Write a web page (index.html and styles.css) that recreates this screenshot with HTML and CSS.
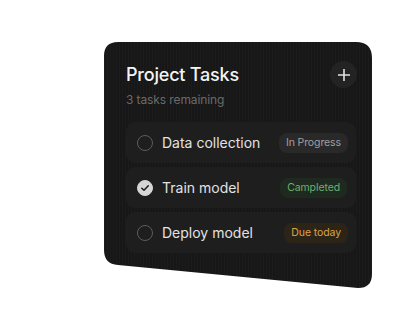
FILE: index.html
```html
<!DOCTYPE html>
<html lang="en">

<head>
    <meta charset="UTF-8">
    <meta name="viewport" content="width=device-width, initial-scale=1.0">
    <title>Project Tasks</title>
    <link rel="stylesheet" href="styles.css">
</head>

<body>
    <div class="task-card">
        <div class="card-header">
            <h4>Project Tasks</h4>
            <button class="add-btn" aria-label="Add task">
                <svg width="12" height="12" viewBox="0 0 12 12">
                    <path d="M6 0.5V11.5M0.5 6H11.5" stroke="#e4e4e4" stroke-width="1.6" stroke-linecap="round" />
                </svg>
            </button>
        </div>
        <p class="subtitle">3 tasks remaining</p>

        <ul class="task-list">
            <li class="task-row">
                <span class="check"></span>
                <span class="task-name">Data collection</span>
                <span class="badge badge-progress">In Progress</span>
            </li>
            <li class="task-row">
                <span class="check check-done">
                    <svg width="10" height="10" viewBox="0 0 10 10">
                        <path d="M1.8 5.2L4 7.3L8.3 2.8" fill="none" stroke="#1b1b1b" stroke-width="1.5" stroke-linecap="round" stroke-linejoin="round" />
                    </svg>
                </span>
                <span class="task-name">Train model</span>
                <span class="badge badge-done">Campleted</span>
            </li>
            <li class="task-row">
                <span class="check"></span>
                <span class="task-name">Deploy model</span>
                <span class="badge badge-due">Due today</span>
            </li>
        </ul>
    </div>
</body>

</html>
```

FILE: styles.css
```css
body {
    font-family: Inter, "Noto Sans", sans-serif;
    background-color: #ffffff;
    margin: 0;
    padding: 42px 0 0 104px;
}
.task-card {
    width: 268px;
    height: 246px;
    box-sizing: border-box;
    padding: 19px 16px 0 22px;
    background-color: #171717;
    background-image: repeating-linear-gradient(90deg, rgba(255, 255, 255, 0.018) 0 1px, transparent 1px 3px);
    /* slanted bottom edge */
    clip-path: path('M 14 0 H 252 Q 268 0 268 16 V 232 Q 268 246 254 246 L 14 223 Q 0 222 0 208 V 14 Q 0 0 14 0 Z');
}
.card-header {
    display: flex;
    align-items: center;
    justify-content: space-between;
}
h4 {
    margin: 0;
    font-size: 18px;
    line-height: 22px;
    font-weight: 500;
    color: #f4f4f4;
    letter-spacing: -0.2px;
}
.add-btn {
    width: 27px;
    height: 27px;
    margin-right: -1px;
    border: none;
    border-radius: 50%;
    background-color: #232323;
    display: flex;
    align-items: center;
    justify-content: center;
    padding: 0;
    cursor: pointer;
}
.subtitle {
    margin: 4px 0 0;
    font-size: 12px;
    line-height: 16px;
    color: #6a6a6a;
    letter-spacing: -0.1px;
}
.task-list {
    list-style: none;
    margin: 14px 0 0;
    padding: 0;
    display: flex;
    flex-direction: column;
    gap: 4px;
}
.task-row {
    height: 41px;
    display: flex;
    align-items: center;
    padding: 0 8px 0 11px;
    border-radius: 9px;
    background-color: #1e1e1e;
}
.check {
    width: 14px;
    height: 14px;
    border: 1.5px solid #5c5c5c;
    border-radius: 50%;
    display: flex;
    align-items: center;
    justify-content: center;
    flex-shrink: 0;
}
.check-done {
    border-color: #d6d6d6;
    background-color: #d6d6d6;
}
.task-name {
    margin-left: 9px;
    flex: 1;
    font-size: 14px;
    color: #e2e2e2;
}
.badge {
    height: 20px;
    line-height: 20px;
    padding: 0 7px;
    border-radius: 8px;
    font-size: 10.5px;
    letter-spacing: -0.1px;
}
.badge-progress {
    background-color: #292929;
    color: #a0a0a0;
}
.badge-done {
    background-color: #1e2a20;
    color: #6fae72;
    margin-right: 1px;
}
.badge-due {
    background-color: #2d2418;
    color: #d9a548;
}
```
